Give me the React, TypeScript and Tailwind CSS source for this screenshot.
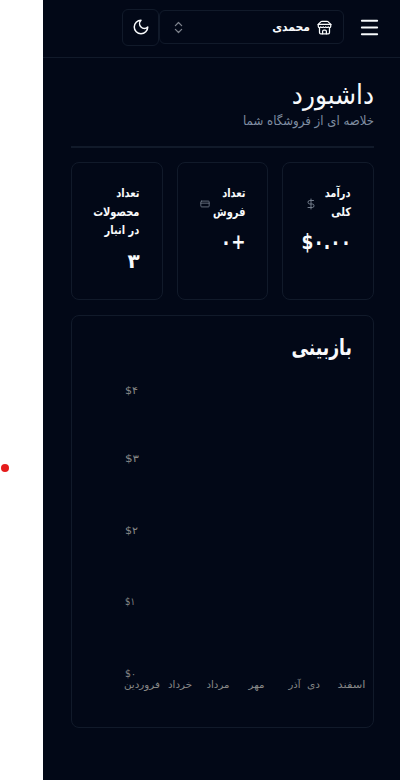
import React from 'react';
import { ChevronsUpDown, DollarSign, Menu } from 'lucide-react';

const ticks = [
  { label: '$۴', y: 394, w: 13 },
  { label: '$۳', y: 462, w: 14 },
  { label: '$۲', y: 534, w: 13 },
  { label: '$۱', y: 605, w: 10 },
  { label: '$۰', y: 677, w: 11 },
];

const months = [
  { label: 'فروردین', x: 142, w: 36 },
  { label: 'خرداد', x: 180, w: 24 },
  { label: 'مرداد', x: 218, w: 23 },
  { label: 'مهر', x: 256.5, w: 16 },
  { label: 'آذر', x: 294.5, w: 12 },
  { label: 'دی', x: 313.5, w: 13 },
  { label: 'اسفند', x: 351.5, w: 28 },
];

function Icon({ className, children }: { className: string; children: React.ReactNode }) {
  return (
    <svg className={className} viewBox="0 0 24 24" fill="none" stroke="currentColor" strokeWidth="2" strokeLinecap="round" strokeLinejoin="round">
      {children}
    </svg>
  );
}

function StoreIcon() {
  return (
    <Icon className="size-[15px] shrink-0">
      <path d="m2 7 4.41-4.41A2 2 0 0 1 7.83 2h8.34a2 2 0 0 1 1.42.59L22 7" />
      <path d="M4 12v8a2 2 0 0 0 2 2h12a2 2 0 0 0 2-2v-8" />
      <path d="M15 22v-4a2 2 0 0 0-2-2h-2a2 2 0 0 0-2 2v4" />
      <path d="M2 7h20" />
      <path d="M22 7v3a2 2 0 0 1-2 2a2.7 2.7 0 0 1-1.59-.63.7.7 0 0 0-.82 0A2.7 2.7 0 0 1 16 12a2.7 2.7 0 0 1-1.59-.63.7.7 0 0 0-.82 0A2.7 2.7 0 0 1 12 12a2.7 2.7 0 0 1-1.59-.63.7.7 0 0 0-.82 0A2.7 2.7 0 0 1 8 12a2.7 2.7 0 0 1-1.59-.63.7.7 0 0 0-.82 0A2.7 2.7 0 0 1 4 12a2 2 0 0 1-2-2V7" />
    </Icon>
  );
}

function Card({ title, icon, value }: { title: string[]; icon?: React.ReactNode; value: React.ReactNode }) {
  return (
    <div className="h-[138px] rounded-lg border border-[#111a2a] pt-[21px] pr-[22px] pl-[18px]">
      <div className="flex h-[37px] items-start justify-between">
        <div className="w-[32px] text-[12px] font-bold leading-[18.6px] whitespace-nowrap">
          {title.map((line) => (
            <div key={line} className="w-max origin-right scale-x-[0.82]">{line}</div>
          ))}
        </div>
        {icon && <div className="flex h-[39px] items-center">{icon}</div>}
      </div>
      <div className={title.length > 2 ? 'mt-[26px] h-7 text-[20px] leading-7 font-bold' : 'mt-[7px] h-7 text-[21px] leading-7 font-bold whitespace-nowrap'}>{value}</div>
    </div>
  );
}

export default function App() {
  return (
    <div dir="ltr" className="relative h-[780px] w-[400px] overflow-hidden bg-white pl-[43px] font-['DejaVu_Sans',sans-serif]">
      <div className="absolute top-[464px] left-[1px] size-[8px] rounded-full bg-[#e51c1c]" />
      <div dir="rtl" className="h-full bg-[#020817] text-[#f8fafc]">
        <header className="flex h-[58px] items-center border-b border-[#111a2a] pr-[19px] pb-[3px]">
          <Menu className="size-[23px]" strokeWidth={2} />
          <div className="mr-[14px] flex h-[34px] w-[185px] items-center rounded-md border border-[#111a2a] pr-[11px] pl-[11px]">
            <StoreIcon />
            <span className="mr-[7px] w-[39px] origin-right scale-x-[0.9] text-[12px] font-bold whitespace-nowrap">محمدی</span>
            <ChevronsUpDown className="mr-auto size-[15px] text-[#7d828c]" />
          </div>
          <div className="flex h-[37px] w-[37px] items-center justify-center rounded-md border border-[#111a2a]">
            <Icon className="size-[18px]">
              <path d="M12 3a6 6 0 0 0 9 9 9 9 0 1 1-9-9Z" />
            </Icon>
          </div>
        </header>

        <main className="pt-[20px] pr-[26px] pl-7">
          <h1 className="h-[34px] origin-right scale-x-[0.92] text-[27px] leading-[34px]">داشبورد</h1>
          <p className="h-[18px] origin-right scale-x-[0.94] text-[12.5px] leading-[18px] whitespace-nowrap text-[#7f8da1]">خلاصه ای از فروشگاه شما</p>
          <div className="mt-4 h-[2px] bg-[#111a2a]" />

          <div className="mt-[14px] grid grid-cols-3 gap-[14px]">
            <Card
              title={['درآمد', 'کلی']}
              icon={<DollarSign className="ml-1 size-[12px] shrink-0 text-[#737d8c]" />}
              value={<span dir="ltr" className="inline-block origin-right scale-x-[0.81]">$۰.۰۰</span>}
            />
            <Card
              title={['تعداد', 'فروش']}
              icon={
                <Icon className="ml-1 size-[10px] shrink-0 text-[#737d8c]">
                  <rect width="20" height="14" x="2" y="5" rx="2" />
                  <path d="M2 10h20" />
                </Icon>
              }
              value={<span dir="ltr" className="inline-block origin-right scale-x-[0.81]">۰+</span>}
            />
            <Card title={['تعداد', 'محصولات', 'در انبار']} value="۳" />
          </div>

          <section className="mt-[15px] h-[413px] rounded-lg border border-[#111a2a]">
            <h2 className="mt-[15px] mr-[21px] h-8 origin-right scale-x-[0.78] text-[22px] leading-[34px] font-bold">بازبینی</h2>
            <svg className="block" width="301" height="340" viewBox="72 363 301 340" direction="ltr" fill="#888888" fontSize="10">
              {ticks.map((t) => (
                <text key={t.label} x="125" y={t.y} textLength={t.w} lengthAdjust="spacingAndGlyphs">{t.label}</text>
              ))}
              {months.map((m) => (
                <text key={m.label} x={m.x} y="688.4" textAnchor="middle" textLength={m.w} lengthAdjust="spacingAndGlyphs">{m.label}</text>
              ))}
            </svg>
          </section>
        </main>
      </div>
    </div>
  );
}
